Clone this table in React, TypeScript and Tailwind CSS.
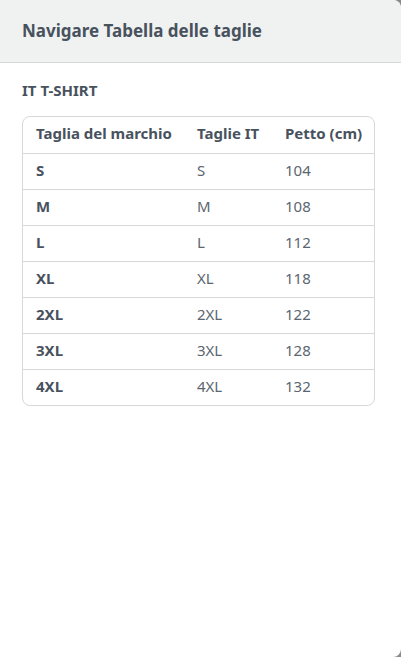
export default function App() {
  const rows = [
    ["S", "S", "104"],
    ["M", "M", "108"],
    ["L", "L", "112"],
    ["XL", "XL", "118"],
    ["2XL", "2XL", "122"],
    ["3XL", "3XL", "128"],
    ["4XL", "4XL", "132"],
  ];
  return (
    <div className="w-[401px] h-[657px] bg-[#8a8a8a]" style={{ fontFamily: '"Noto Sans", "Open Sans", sans-serif' }}>
      <div className="w-full h-full bg-white rounded-r-[8px] overflow-hidden flex flex-col">
        <div className="h-[63px] shrink-0 bg-[#f0f2f2] border-b border-[#d5d9d9] flex items-center px-[22px] pb-[2px]">
          <h1 className="text-[17px] font-bold text-[#48525e] leading-none">Navigare Tabella delle taglie</h1>
        </div>
        <div className="px-[22px] pt-[18px]">
          <div className="text-[15px] font-bold text-[#48525e] leading-[18px]">IT T-SHIRT</div>
          <div className="mt-[17px] w-[353px] border border-[#d5d9d9] rounded-[8px] overflow-hidden">
            <div className="grid grid-cols-[161px_88px_1fr] h-[36px] items-center pb-[3px] text-[15px] font-bold text-[#48525e]">
              <div className="pl-[13px]">Taglia del marchio</div>
              <div className="pl-[13px]">Taglie IT</div>
              <div className="pl-[13px]">Petto (cm)</div>
            </div>
            {rows.map((r) => (
              <div key={r[0]} className="grid grid-cols-[161px_88px_1fr] h-[36px] items-center pb-[3px] text-[15px] border-t border-[#d5d9d9]">
                <div className="pl-[13px] font-bold text-[#48525e]">{r[0]}</div>
                <div className="pl-[13px] text-[#5c6670]">{r[1]}</div>
                <div className="pl-[13px] text-[#5c6670]">{r[2]}</div>
              </div>
            ))}
          </div>
        </div>
      </div>
    </div>
  );
}
